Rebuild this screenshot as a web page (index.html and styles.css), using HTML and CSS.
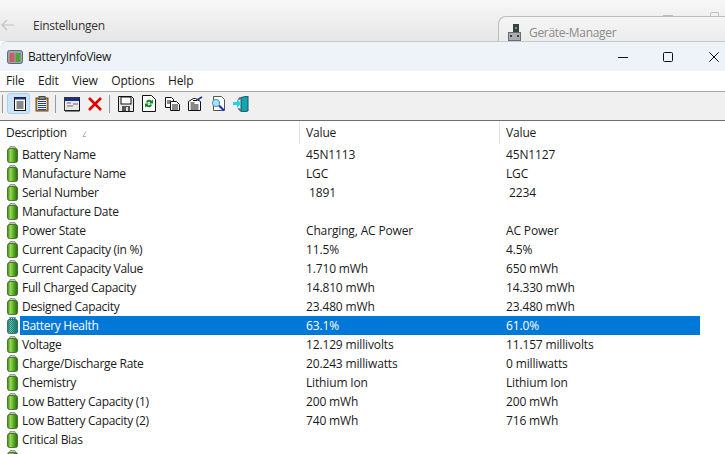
FILE: index.html
```html
<!DOCTYPE html>
<html lang="en">
<head>
  <meta charset="UTF-8" />
  <title>BatteryInfoView</title>
  <link rel="stylesheet" href="styles.css">
</head>
<body>

  <svg class="defs" width="0" height="0">
    <defs>
      <linearGradient id="cell" x1="0" x2="1" y1="0" y2="0">
        <stop offset="0" stop-color="#3d8a1a"/>
        <stop offset="0.3" stop-color="#9ad653"/>
        <stop offset="0.65" stop-color="#4fa520"/>
        <stop offset="1" stop-color="#2a6a12"/>
      </linearGradient>
      <pattern id="dither" width="2" height="2" patternUnits="userSpaceOnUse">
        <rect width="1" height="1" fill="#0078d7"/>
        <rect x="1" y="1" width="1" height="1" fill="#0078d7"/>
      </pattern>
      <symbol id="battery" viewBox="0 0 11 17">
        <path d="M3 .5h5l1 2.500H2z" fill="#c3c6c0" stroke="#6d7169" stroke-width=".6"/>
        <rect x=".5" y="2.500" width="10" height="14" rx="2" fill="url(#cell)" stroke="#33661d" stroke-width=".8"/>
      </symbol>
    </defs>
  </svg>

  <!-- Windows behind the app -->
  <div class="backdrop">
    <div class="settings">
      <svg class="back-arrow" width="14" height="12" viewBox="0 0 14 12"><path d="M6 1 1 6l5 5M1 6h12" fill="none" stroke="#c4c4c4" stroke-width="1.2"/></svg>
      <span>Einstellungen</span>
    </div>
    <div class="device-tab">
      <svg width="13" height="17" viewBox="0 0 13 17">
        <rect x="5" y="0" width="6" height="9" fill="#3c3f42"/>
        <rect x="7" y="3" width="2" height="2" fill="#27c93f"/>
        <rect x=".5" y="8.500" width="12" height="8" fill="#a9adb1" stroke="#6a6d70"/>
        <rect x="2" y="11" width="2" height="2" fill="#3c3f42"/>
        <rect x="9" y="11" width="2" height="2" fill="#3c3f42"/>
      </svg>
      <span>Geräte-Manager</span>
    </div>
    <div class="peek-min"></div>
    <div class="peek-max"></div>
  </div>

  <div class="window">
    <div class="titlebar">
      <svg class="app-icon" width="16" height="14" viewBox="0 0 16 14">
        <rect x=".5" y=".5" width="15" height="13" rx="2" fill="#9aa6b5" stroke="#5f6b7a"/>
        <rect x="2.500" y="3" width="5" height="9" fill="#c9605c"/>
        <rect x="8.500" y="3" width="5" height="9" fill="#559f3c"/>
      </svg>
      <span class="app-title">BatteryInfoView</span>
      <div class="controls">
        <svg width="10" height="10" viewBox="0 0 10 10"><path d="M0 5.500h10" stroke="#111" stroke-width="1"/></svg>
        <svg width="10" height="10" viewBox="0 0 10 10"><rect x=".5" y=".5" width="9" height="9" rx="1" fill="none" stroke="#111"/></svg>
        <svg width="10" height="10" viewBox="0 0 10 10"><path d="M.3.3l9.400 9.400M9.700.3.3 9.700" stroke="#111" stroke-width="1"/></svg>
      </div>
    </div>

    <div class="menubar">
      <span>File</span><span>Edit</span><span>View</span><span>Options</span><span>Help</span>
    </div>

    <div class="toolbar">
      <i class="sep"></i>
      <div class="tool active">
        <svg width="16" height="16" viewBox="0 0 16 16"><rect x="3.500" y="1.500" width="11" height="13" fill="#fff" stroke="#111"/><rect x="3.500" y="1.500" width="11" height="2" fill="#1c2f8f"/><path d="M5.500 6h7M5.500 8h7M5.500 10h7M5.500 12h7" stroke="#111"/></svg>
      </div>
      <div class="tool">
        <svg width="16" height="16" viewBox="0 0 16 16"><rect x="2" y="2" width="12" height="13" fill="#b08a3c" stroke="#6b4a1a"/><rect x="5" y="0.500" width="6" height="3" fill="#8c8c8c" stroke="#444"/><rect x="3.500" y="4" width="9" height="10" fill="#fff"/><path d="M4 5.500h8M4 7.500h8M4 9.500h8M4 11.500h8M4 13.500h8" stroke="#1c34c4"/></svg>
      </div>
      <i class="sep"></i>
      <div class="tool">
        <svg width="16" height="16" viewBox="0 0 16 16"><rect x=".5" y="1.500" width="15" height="13" fill="#e8e8e8" stroke="#333"/><rect x="1" y="2" width="14" height="3" fill="#1c2f8f"/><path d="M3 7h4M9 8h5M3 10h6" stroke="#666"/><path d="M15.500 3v12H1" fill="none" stroke="#111"/></svg>
      </div>
      <div class="tool">
        <svg width="16" height="16" viewBox="0 0 16 16"><path d="M2 2 14 14M14 2 2 14" stroke="#e00000" stroke-width="2.600"/></svg>
      </div>
      <i class="sep wide"></i>
      <div class="tool">
        <svg width="16" height="16" viewBox="0 0 16 16"><path d="M.5.5h13l2 2v13H.5z" fill="#e8e8e8" stroke="#111"/><rect x="3" y="1" width="10" height="7" fill="#fff" stroke="#111"/><rect x="4" y="10" width="8" height="5" fill="#555"/><rect x="8" y="11" width="2" height="4" fill="#ddd"/></svg>
      </div>
      <div class="tool">
        <svg width="16" height="17" viewBox="0 0 16 17"><path d="M1.500.5h9l4 4v12h-13z" fill="#fff" stroke="#111"/><path d="M5 7a3.200 3.200 0 0 1 5.500-1.200L12 4.500v4H8l1.400-1.300A1.800 1.800 0 0 0 6.400 8z" fill="#0d8a24"/><path d="M11 10a3.200 3.200 0 0 1-5.500 1.200L4 12.500v-4h4l-1.400 1.300A1.800 1.800 0 0 0 9.600 9z" fill="#0d8a24"/></svg>
      </div>
      <div class="tool">
        <svg width="16" height="16" viewBox="0 0 16 16"><path d="M1.500 1.500h6l2 2v8h-8z" fill="#fff" stroke="#111"/><path d="M6.500 5.500h6l3 3v6h-9z" fill="#fff" stroke="#111"/><path d="M3 5h4M3 7h3M8 9h6M8 11h6M8 13h6" stroke="#111"/></svg>
      </div>
      <div class="tool">
        <svg width="16" height="16" viewBox="0 0 16 16"><path d="M1.500 5.500l5-3h2l5 3v9h-12z" fill="#fff" stroke="#111"/><path d="M3.500 7h4M3.500 9h8M3.500 11h8M3.500 13h8M6 4.500h4" stroke="#111"/><path d="M10 4l5-3" stroke="#1c2f8f" stroke-width="1.500"/></svg>
      </div>
      <div class="tool">
        <svg width="16" height="16" viewBox="0 0 16 16"><path d="M3.500.5h8l3 3v11h-11z" fill="#fff" stroke="#555"/><path d="M9 9.500 14 14.500" stroke="#1c34c4" stroke-width="2.200"/><circle cx="6" cy="7" r="3.600" fill="#a8e3f2" stroke="#4a90b0"/></svg>
      </div>
      <div class="tool">
        <svg width="16" height="16" viewBox="0 0 16 16"><path d="M8 1.500 15 0v15l-7 1z" fill="#18a3ad" stroke="#0d5c62"/><path d="M8 2H6v2M6 12v2h2" fill="none" stroke="#333"/><path d="M0 6h4V3l4 4.500L4 12V9H0z" fill="#22d3e6"/></svg>
      </div>
    </div>

    <div class="list">
      <div class="row head">
        <div class="col first">Description<svg class="sort" width="6" height="6" viewBox="0 0 6 6"><path d="M5 .5 2 5.500h3" fill="none" stroke="#b0b0b0"/></svg></div>
        <div class="col">Value</div>
        <div class="col">Value</div>
      </div>
      <div class="row"><div class="col first"><svg class="batt"><use href="#battery"/></svg><span>Battery Name</span></div><div class="col">45N1113</div><div class="col">45N1127</div></div>
      <div class="row"><div class="col first"><svg class="batt"><use href="#battery"/></svg><span>Manufacture Name</span></div><div class="col">LGC</div><div class="col">LGC</div></div>
      <div class="row"><div class="col first"><svg class="batt"><use href="#battery"/></svg><span>Serial Number</span></div><div class="col"><span class="pad">1891</span></div><div class="col"><span class="pad">2234</span></div></div>
      <div class="row"><div class="col first"><svg class="batt"><use href="#battery"/></svg><span>Manufacture Date</span></div><div class="col"></div><div class="col"></div></div>
      <div class="row"><div class="col first"><svg class="batt"><use href="#battery"/></svg><span>Power State</span></div><div class="col">Charging, AC Power</div><div class="col">AC Power</div></div>
      <div class="row"><div class="col first"><svg class="batt"><use href="#battery"/></svg><span>Current Capacity (in %)</span></div><div class="col">11.5%</div><div class="col">4.5%</div></div>
      <div class="row"><div class="col first"><svg class="batt"><use href="#battery"/></svg><span>Current Capacity Value</span></div><div class="col">1.710 mWh</div><div class="col">650 mWh</div></div>
      <div class="row"><div class="col first"><svg class="batt"><use href="#battery"/></svg><span>Full Charged Capacity</span></div><div class="col">14.810 mWh</div><div class="col">14.330 mWh</div></div>
      <div class="row"><div class="col first"><svg class="batt"><use href="#battery"/></svg><span>Designed Capacity</span></div><div class="col">23.480 mWh</div><div class="col">23.480 mWh</div></div>
      <div class="row selected"><div class="col first"><svg class="batt"><use href="#battery"/><rect x=".5" y="2.500" width="10" height="14" rx="2" fill="url(#dither)"/><rect x="2" y=".5" width="7" height="2" fill="url(#dither)"/></svg><span>Battery Health</span></div><div class="col">63.1%</div><div class="col">61.0%</div></div>
      <div class="row"><div class="col first"><svg class="batt"><use href="#battery"/></svg><span>Voltage</span></div><div class="col">12.129 millivolts</div><div class="col">11.157 millivolts</div></div>
      <div class="row"><div class="col first"><svg class="batt"><use href="#battery"/></svg><span>Charge/Discharge Rate</span></div><div class="col">20.243 milliwatts</div><div class="col">0 milliwatts</div></div>
      <div class="row"><div class="col first"><svg class="batt"><use href="#battery"/></svg><span>Chemistry</span></div><div class="col">Lithium Ion</div><div class="col">Lithium Ion</div></div>
      <div class="row"><div class="col first"><svg class="batt"><use href="#battery"/></svg><span>Low Battery Capacity (1)</span></div><div class="col">200 mWh</div><div class="col">200 mWh</div></div>
      <div class="row"><div class="col first"><svg class="batt"><use href="#battery"/></svg><span>Low Battery Capacity (2)</span></div><div class="col">740 mWh</div><div class="col">716 mWh</div></div>
      <div class="row"><div class="col first"><svg class="batt"><use href="#battery"/></svg><span>Critical Bias</span></div><div class="col"></div><div class="col"></div></div>
      <div class="row"><div class="col first"><svg class="batt"><use href="#battery"/></svg></div><div class="col"></div><div class="col"></div></div>
    </div>
  </div>

</body>
</html>
```

FILE: styles.css
```css
* {
  margin: 0;
  padding: 0;
  box-sizing: border-box;
}

html, body {
  height: 100%;
  overflow: hidden;
}

body {
  width: 725px;
  height: 454px;
  font-family: 'Open Sans', 'Noto Sans', sans-serif;
  font-size: 12px;
  letter-spacing: -0.15px;
  color: #1a1a1a;
  background: #fff;
}

.defs {
  position: absolute;
}

/* Windows behind the app */
.backdrop {
  position: relative;
  height: 41px;
  display: flex;
  justify-content: space-between;
  background: linear-gradient(#f7f7f7, #e6e6e6);
}

.settings {
  display: flex;
  align-items: center;
  height: 50px;
  padding-left: 1px;
  gap: 18px;
  color: #333;
  letter-spacing: -0.25px;
}

.back-arrow {
  margin-bottom: 1px;
}

.device-tab {
  width: 227px;
  margin-top: 16px;
  padding: 7px 0 0 9px;
  display: flex;
  align-items: flex-start;
  gap: 8px;
  border: 1px solid #bdbdbd;
  border-bottom: none;
  border-right: none;
  border-radius: 8px 0 0 0;
  background: linear-gradient(#f5f5f5, #ececec);
  color: #8b8b8b;
  letter-spacing: -0.3px;
}

.peek-min {
  position: absolute;
  left: 663px;
  top: 15px;
  width: 10px;
  height: 1px;
  background: #bdbdbd;
}

.peek-max {
  position: absolute;
  left: 710px;
  top: 12px;
  width: 9px;
  height: 4px;
  border: 1px solid #bdbdbd;
  border-bottom: none;
  border-radius: 2px 2px 0 0;
}

/* Main window */
.window {
  height: 413px;
  background: #fff;
  border-top: 1px solid #c9c9c9;
  border-radius: 8px 0 0 0;
  overflow: hidden;
}

.titlebar {
  height: 29px;
  display: flex;
  align-items: center;
  padding-left: 7px;
  background: #eef2f9;
}

.app-title {
  margin-left: 5px;
  letter-spacing: -0.4px;
}

.controls {
  margin-left: auto;
  display: flex;
  align-items: center;
  gap: 35px;
  padding-right: 6px;
}

.controls svg:last-child {
  margin-left: 1px;
}

.menubar {
  height: 21px;
  display: flex;
  align-items: center;
  padding: 0 0 2px 6px;
  gap: 13.5px;
  background: #fff;
  border-bottom: 1px solid #a9a9a9;
}

.toolbar {
  height: 29px;
  display: flex;
  align-items: center;
  padding: 0 0 5px 0;
  background: #f0f0f0;
  border-bottom: 1px solid #6e6e6e;
}

.sep {
  width: 1px;
  height: 18px;
  margin: 0 4px 0 2px;
  background: #9a9a9a;
}

.sep.wide {
  margin-left: 3px;
}

.tool {
  width: 23px;
  height: 21px;
  display: flex;
  align-items: center;
  justify-content: center;
}

.tool.active {
  background: #cce4f7;
  border: 1px solid #a5d0f0;
  border-radius: 3px;
}

/* List */
.row {
  height: 19px;
  display: grid;
  grid-template-columns: 300px 200px 200px;
  align-items: center;
}

.head {
  height: 24px;
  padding-bottom: 1px;
}

.head .col {
  height: 23px;
  border-right: 1px solid #e5e5e5;
}

.head .col:last-child {
  border-right: none;
}

.col {
  display: flex;
  align-items: center;
  padding-left: 6px;
  white-space: nowrap;
}

.col.first {
  padding-left: 7px;
  gap: 2px;
  letter-spacing: -0.3px;
}

.head .col.first {
  padding-left: 6px;
  gap: 0;
}

.sort {
  margin-left: 14px;
  margin-top: 2px;
}

.batt {
  width: 11px;
  height: 17px;
  flex: none;
}

.col.first span {
  padding-left: 2px;
}

.selected {
  color: #fff;
}

.selected .col {
  background: #0078d7;
  height: 19px;
}

.selected .col.first {
  background: linear-gradient(to right, transparent 20px, #0078d7 20px);
}

.pad {
  padding-left: 3px;
}
```
